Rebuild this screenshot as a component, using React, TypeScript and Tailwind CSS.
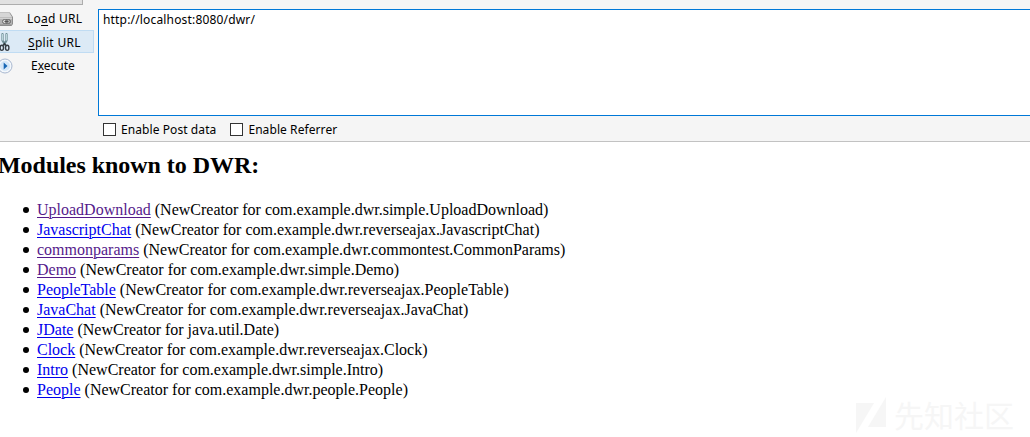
type Module = { name: string; path: string; visited?: boolean };

const modules: Module[] = [
  { name: "UploadDownload", path: "com.example.dwr.simple.UploadDownload", visited: true },
  { name: "JavascriptChat", path: "com.example.dwr.reverseajax.JavascriptChat" },
  { name: "commonparams", path: "com.example.dwr.commontest.CommonParams", visited: true },
  { name: "Demo", path: "com.example.dwr.simple.Demo", visited: true },
  { name: "PeopleTable", path: "com.example.dwr.reverseajax.PeopleTable" },
  { name: "JavaChat", path: "com.example.dwr.reverseajax.JavaChat" },
  { name: "JDate", path: "java.util.Date" },
  { name: "Clock", path: "com.example.dwr.reverseajax.Clock" },
  { name: "Intro", path: "com.example.dwr.simple.Intro" },
  { name: "People", path: "com.example.dwr.people.People" },
];

function DriveIcon() {
  return (
    <svg width="14" height="16" viewBox="0 0 14 16" className="block shrink-0">
      <path d="M0 1.500h10l3 4.500v7l-1.500 2H0z" fill="#8d8d8d" />
      <path d="M0 2h9.500l2.500 4H0z" fill="#d6d6d6" />
      <path d="M0 7h12v6.500H0z" fill="#b4b4b4" />
      <path d="M0 7h12" stroke="#efefef" />
      <rect x="2.500" y="8.500" width="5" height="4" rx="2" fill="#ddd" stroke="#6a6a6a" />
      <rect x="5.500" y="8.500" width="5" height="4" rx="2" fill="none" stroke="#6a6a6a" />
      <path d="M4.500 10.500h4" stroke="#555" />
    </svg>
  );
}

function ScissorsIcon() {
  return (
    <svg width="10" height="20" viewBox="0 0 10 20" className="block shrink-0" fill="none">
      <path d="M2.500 2v6.500l2.500 4M6.500 2v6.500l-2.500 4" stroke="#6c8b93" strokeWidth="2.200" strokeLinecap="round" />
      <path d="M2.500 2v6.500M6.500 2v6.500" stroke="#c4dce2" strokeWidth=".9" />
      <ellipse cx="1.800" cy="15.800" rx="1.700" ry="2.600" stroke="#363c42" strokeWidth="1.400" />
      <ellipse cx="7.200" cy="15.800" rx="1.700" ry="2.600" stroke="#363c42" strokeWidth="1.400" />
      <path d="M3 13.500l1.500-2 1.500 2" stroke="#363c42" strokeWidth="1.300" />
    </svg>
  );
}

function ExecuteIcon() {
  return (
    <svg width="14" height="16" viewBox="0 0 14 16" className="block shrink-0">
      <circle cx="5" cy="8" r="7" fill="#f4f8fc" stroke="#a9b8d0" />
      <circle cx="5" cy="8" r="5" fill="#d5e7f8" />
      <path d="M3.700 4.500L7.500 8l-3.800 3.500z" fill="#1767b5" />
    </svg>
  );
}

function Check({ label }: { label: string }) {
  return (
    <label className="flex items-center">
      <span className="size-[13px] border border-[#333] bg-white" />
      <span className="ml-[5px] tracking-[0.08px] whitespace-nowrap">{label}</span>
    </label>
  );
}

export default function App() {
  return (
    <div className="relative h-[437px] w-full overflow-hidden bg-white">
      <header className="flex h-[142px] border-b border-[#c2c2c2] bg-[#f5f5f5] font-['Noto_Sans','Noto_Sans_CJK_SC',sans-serif] text-[12px] text-black">
        <nav className="w-[98px] shrink-0">
          <div className="h-[5px] w-[83px] border-r border-b border-[#adadad] bg-[#e1e1e1]" />
          <div className="mt-[3px] flex h-[22px] items-center">
            <DriveIcon />
            <span className="ml-[13px] tracking-[0.25px] whitespace-nowrap">Lo<u className="underline-offset-2">a</u>d URL</span>
          </div>
          <div className="flex h-[23px] w-[94px] items-center border border-l-0 border-[#c0dcf3] bg-[#dceaf6]">
            <ScissorsIcon />
            <span className="ml-[18px] pt-[2px] tracking-[0.3px] whitespace-nowrap"><u className="underline-offset-2">S</u>plit URL</span>
          </div>
          <div className="flex h-[26px] items-center">
            <ExecuteIcon />
            <span className="ml-[17px] whitespace-nowrap">E<u className="underline-offset-2">x</u>ecute</span>
          </div>
        </nav>
        <div className="flex min-w-0 flex-1 flex-col pt-[9px]">
          <div className="h-[107px] border border-r-0 border-[#0078d7] bg-white pt-[2px] pl-[4px] leading-4 tracking-[0.17px]">
            http://localhost:8080/dwr/
          </div>
          <div className="flex h-[25px] items-center gap-[14px] pt-[2px] pl-[5px]">
            <Check label="Enable Post data" />
            <Check label="Enable Referrer" />
          </div>
        </div>
      </header>
      <main className="font-['Liberation_Serif',serif] text-black">
        <h2 className="-ml-[2px] pt-[9px] text-[24px] leading-[28px] font-bold tracking-[-0.04px]">Modules known to DWR:</h2>
        <ul className="mt-[21px]">
          {modules.map((m) => (
            <li key={m.name} className="flex h-5 items-center text-[16px] leading-5 whitespace-pre">
              <span className="mr-[8px] ml-[23px] size-[6px] rounded-full bg-black" />
              <a className={m.visited ? "text-[#551a8b] underline decoration-1 underline-offset-2" : "text-[#0000ee] underline decoration-1 underline-offset-2"}>{m.name}</a>
              <span> (NewCreator for {m.path})</span>
            </li>
          ))}
        </ul>
      </main>
      <div className="absolute top-[395px] left-[856px] flex items-center text-[#f6f6f6]">
        <svg width="31" height="38" viewBox="0 0 31 38" fill="currentColor">
          <path d="M0 8h18L0 38zM30 2v30H12z" />
        </svg>
        <span className="ml-[7px] font-['Noto_Sans_CJK_SC',sans-serif] text-[30px] leading-[36px]">先知社区</span>
      </div>
    </div>
  );
}
